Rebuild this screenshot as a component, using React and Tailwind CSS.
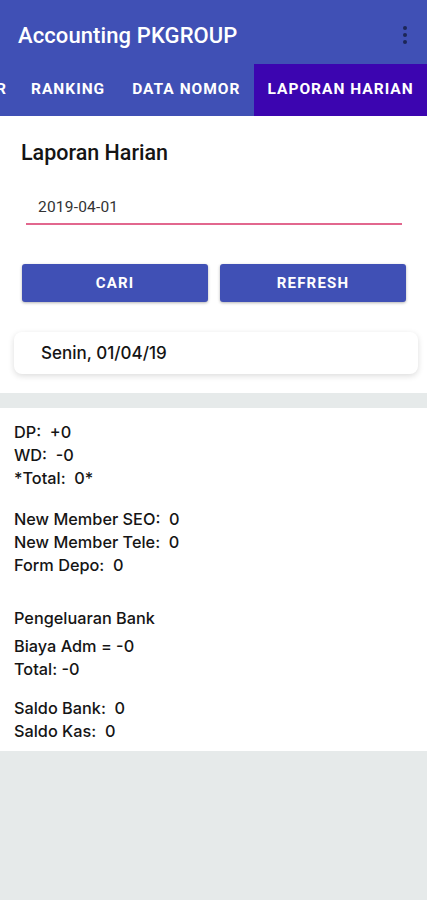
import React from 'react';

const rows1 = ['DP:  +0', 'WD:  -0', '*Total:  0*'];
const rows2 = ['New Member SEO:  0', 'New Member Tele:  0', 'Form Depo:  0'];

const Line = ({ children }) => (
  <p className="h-[23px] leading-[23px] whitespace-pre">{children}</p>
);

export default function App() {
  return (
    <div className="w-[427px] h-[900px] bg-[#e6eaea] font-['Roboto',sans-serif] overflow-hidden">
      {/* App bar */}
      <div className="bg-[#4050b5] h-[64px] flex items-center justify-between pl-[18px] pr-[20px]">
        <h1 className="text-white text-[22px] font-medium tracking-[0.1px] mt-[6px]">Accounting PKGROUP</h1>
        <div className="flex flex-col gap-[3px] mt-[6px]">
          <span className="w-[4px] h-[4px] rounded-full bg-[#1c2657]" />
          <span className="w-[4px] h-[4px] rounded-full bg-[#1c2657]" />
          <span className="w-[4px] h-[4px] rounded-full bg-[#1c2657]" />
        </div>
      </div>

      {/* Tabs */}
      <div className="bg-[#4050b5] h-[52px] flex items-stretch text-white text-[15.5px] font-bold tracking-[1px] overflow-hidden">
        <div className="w-[9px] flex items-center overflow-hidden">
          <span className="-ml-[4px]">R</span>
        </div>
        <div className="flex items-center pl-[22px] pr-[27px]">RANKING</div>
        <div className="flex items-center pr-[14px]">DATA NOMOR</div>
        <div className="flex-1 bg-[#3c05b0] flex items-center pl-[13px] whitespace-nowrap">LAPORAN HARIAN</div>
      </div>

      {/* Form section */}
      <div className="bg-white pt-[24px] pb-[19px]">
        <h2 className="pl-[21px] text-[21.5px] font-medium text-[#141414] leading-[26px]">Laporan Harian</h2>
        <div className="ml-[26px] mr-[25px] mt-[29px] border-b-2 border-[#e2678e] pl-[12px] pb-[4px]">
          <span className="text-[15.5px] text-[#333] tracking-[0.2px]">2019-04-01</span>
        </div>
        <div className="flex gap-[12px] pl-[22px] pr-[21px] mt-[39px]">
          <button className="flex-1 h-[38px] rounded-[3px] bg-[#4050b5] text-white text-[15px] font-bold tracking-[1.2px] shadow-[0_1px_3px_rgba(0,0,0,0.3)]">
            CARI
          </button>
          <button className="flex-1 h-[38px] rounded-[3px] bg-[#4050b5] text-white text-[15px] font-bold tracking-[1.2px] shadow-[0_1px_3px_rgba(0,0,0,0.3)]">
            REFRESH
          </button>
        </div>
        <div className="ml-[14px] mr-[9px] mt-[30px] h-[42px] rounded-[8px] bg-white shadow-[0_2px_6px_rgba(0,0,0,0.14)] flex items-center pl-[27px]">
          <span className="text-[17px] font-medium text-[#141414] font-['Inter',sans-serif]">Senin, 01/04/19</span>
        </div>
      </div>

      <div className="h-[15px] bg-[#e6eaea]" />

      {/* Summary */}
      <div className="bg-white pl-[14px] pt-[13px] pb-[8px] text-[16.3px] font-medium text-[#151515] font-['Inter',sans-serif]">
        {rows1.map(r => <Line key={r}>{r}</Line>)}
        <div className="h-[18px]" />
        {rows2.map(r => <Line key={r}>{r}</Line>)}
        <div className="h-[30px]" />
        <p className="h-[28px] leading-[23px] whitespace-pre">Pengeluaran Bank</p>
        <Line>Biaya Adm = -0</Line>
        <Line>Total: -0</Line>
        <div className="h-[16px]" />
        <Line>Saldo Bank:  0</Line>
        <Line>Saldo Kas:  0</Line>
      </div>
    </div>
  );
}
